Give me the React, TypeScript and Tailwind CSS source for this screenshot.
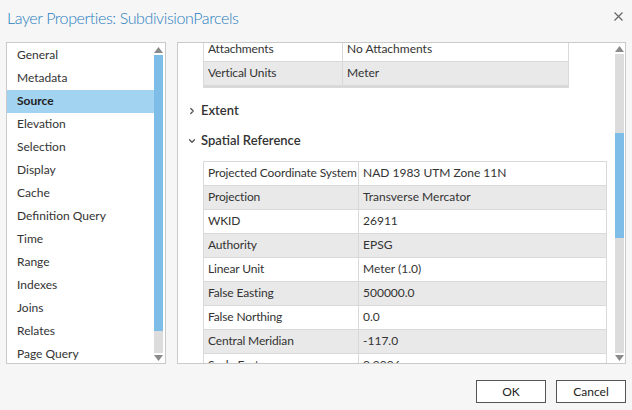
import { ChevronDown, ChevronRight } from 'lucide-react'

const pages = [
  'General',
  'Metadata',
  'Source',
  'Elevation',
  'Selection',
  'Display',
  'Cache',
  'Definition Query',
  'Time',
  'Range',
  'Indexes',
  'Joins',
  'Relates',
  'Page Query',
]

const spatial = [
  ['Projected Coordinate System', 'NAD 1983 UTM Zone 11N'],
  ['Projection', 'Transverse Mercator'],
  ['WKID', '26911'],
  ['Authority', 'EPSG'],
  ['Linear Unit', 'Meter (1.0)'],
  ['False Easting', '500000.0'],
  ['False Northing', '0.0'],
  ['Central Meridian', '-117.0'],
  ['Scale Factor', '0.9996'],
]

function Arrow({ up }: { up?: boolean }) {
  return (
    <svg width="9" height="6" viewBox="0 0 9 6" className="block">
      {up ? <polygon points="4.5,0 9,6 0,6" fill="#8a8a8a" /> : <polygon points="0,0 9,0 4.5,6" fill="#8a8a8a" />}
    </svg>
  )
}

function Row({ k, v, gray, w }: { k: string; v: string; gray: boolean; w: string }) {
  return (
    <div className={`flex h-[24px] border-b border-[#d9d9d9] whitespace-nowrap ${gray ? 'bg-[#e9e9e9]' : 'bg-white'}`}>
      <div className={`${w} shrink-0 border-r border-[#d9d9d9] pl-[4px] pb-[2px] flex items-center tracking-[-0.15px]`}>{k}</div>
      <div className="flex-1 pl-[4px] pb-[2px] flex items-center">{v}</div>
    </div>
  )
}

export default function App() {
  return (
    <div
      className="w-[632px] h-[410px] bg-[#f5f6f5] overflow-hidden text-[12px] text-[#333]"
      style={{ fontFamily: '"Segoe UI", Lato, "Open Sans", sans-serif' }}
    >
      <div className="h-[42px] flex items-start justify-between pl-[7px] pr-[9px]">
        <div className="pt-[6px] text-[16px] tracking-[-0.4px] font-light text-[#2a7dc1]">Layer Properties: SubdivisionParcels</div>
        <svg width="9" height="9" viewBox="0 0 9 9" className="mt-[12px]">
          <path d="M0.5 0.5 L8.5 8.5 M8.5 0.5 L0.5 8.5" stroke="#666" strokeWidth="1.2" />
        </svg>
      </div>

      <div className="flex h-[322px]">
        <div className="ml-[6px] w-[160px] border border-[#cacaca] bg-white flex">
          <div className="flex-1 pt-[1px]">
            {pages.map((p) => (
              <div
                key={p}
                className={`h-[23px] pl-[10px] pb-[2px] flex items-center ${p === 'Source' ? 'bg-[#a2d3f1] font-bold text-[#222]' : ''}`}
              >
                {p}
              </div>
            ))}
          </div>
          <div className="w-[9px] mr-[2px] flex flex-col">
            <div className="h-[12px] flex items-center justify-center pt-[1px]"><Arrow up /></div>
            <div className="h-[276px] bg-[#7dbde8]" />
            <div className="flex-1 bg-[#dcdcdc]" />
            <div className="h-[10px] flex items-center justify-center"><Arrow /></div>
          </div>
        </div>

        <div className="ml-[11px] w-[449px] border border-[#cacaca] bg-white flex overflow-hidden">
          <div className="flex-1 overflow-hidden">
            <div className="ml-[25px] w-[366px] -mt-[5px] border-x border-b-2 border-[#d9d9d9]">
              <Row k="Attachments" v="No Attachments" gray={false} w="w-[139px]" />
              <Row k="Vertical Units" v="Meter" gray w="w-[139px]" />
            </div>
            <div className="mt-[8px] h-[30px] flex items-center pl-[9px] text-[13px] font-semibold text-[#333]">
              <ChevronRight size={10} strokeWidth={3} className="text-[#555] mr-[4px]" />
              Extent
            </div>
            <div className="h-[30px] flex items-center pl-[9px] text-[13px] font-semibold text-[#333]">
              <ChevronDown size={10} strokeWidth={3} className="text-[#555] mr-[4px]" />
              Spatial Reference
            </div>
            <div className="mt-[5px] ml-[25px] w-[404px] border-x border-t border-[#d9d9d9]">
              {spatial.map(([k, v], i) => (
                <Row key={k} k={k} v={v} gray={i % 2 === 1} w="w-[155px]" />
              ))}
            </div>
          </div>
          <div className="w-[9px] mr-[1px] flex flex-col">
            <div className="h-[11px] flex items-center justify-center pt-[1px]"><Arrow up /></div>
            <div className="h-[79px] bg-[#dcdcdc]" />
            <div className="h-[105px] bg-[#7dbde8]" />
            <div className="flex-1 bg-[#dcdcdc]" />
            <div className="h-[10px] flex items-center justify-center"><Arrow /></div>
          </div>
        </div>
      </div>

      <div className="flex justify-end gap-[10px] pr-[6px] mt-[16px]">
        <button className="w-[70px] h-[23px] border border-[#555] bg-white text-[12px] text-[#222]">OK</button>
        <button className="w-[70px] h-[23px] border border-[#555] bg-white text-[12px] text-[#222]">Cancel</button>
      </div>
    </div>
  )
}
